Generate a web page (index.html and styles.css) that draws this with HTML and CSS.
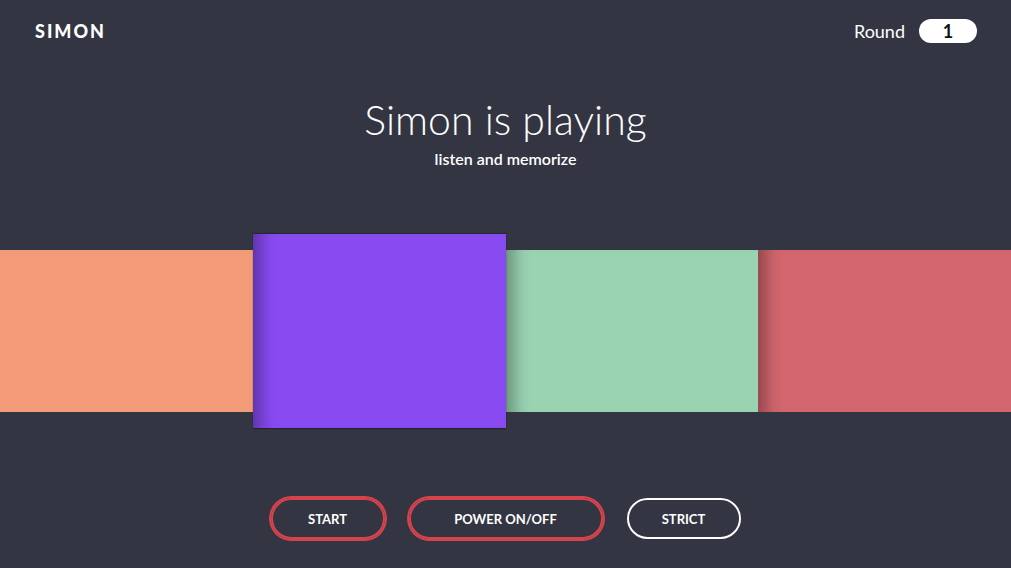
FILE: index.html
```html
<!DOCTYPE html>
<html lang="en">
<head>
<meta charset="utf-8">
<title>Simon</title>
<link rel="stylesheet" href="styles.css">
</head>
<body>
<div class="app">
  <header class="topbar">
    <div class="logo">SIMON</div>
    <div class="round">
      <span class="round-label">Round</span>
      <span class="round-count">1</span>
    </div>
  </header>
  <section class="status">
    <h1 class="status-title">Simon is playing</h1>
    <p class="status-sub">listen and memorize</p>
  </section>
  <section class="board">
    <div class="tile tile-orange"></div>
    <div class="tile tile-purple is-active"></div>
    <div class="tile tile-green"></div>
    <div class="tile tile-red"></div>
  </section>
  <section class="controls">
    <button class="btn btn-on btn-start">START</button>
    <button class="btn btn-on btn-power">POWER ON/OFF</button>
    <button class="btn btn-strict">STRICT</button>
  </section>
</div>
</body>
</html>
```
FILE: styles.css
```css
* { box-sizing: border-box; }
html, body {
  margin: 0;
  padding: 0;
  background: #333542;
  color: #ffffff;
  font-family: Lato, "Open Sans", sans-serif;
}
.app {
  width: 1011px;
  height: 568px;
  display: flex;
  flex-direction: column;
  overflow: hidden;
}
.topbar {
  height: 62px;
  display: flex;
  align-items: center;
  justify-content: space-between;
  padding: 0 34px 0 35px;
}
.logo {
  font-weight: 900;
  font-size: 18px;
  letter-spacing: 2px;
}
.round {
  display: flex;
  align-items: center;
  gap: 14px;
}
.round-label {
  font-size: 18px;
}
.round-count {
  width: 58px;
  height: 24px;
  border-radius: 12px;
  background: #ffffff;
  color: #111111;
  font-size: 18px;
  font-weight: 700;
  line-height: 24px;
  text-align: center;
}
.status {
  text-align: center;
  margin-top: 36px;
}
.status-title {
  margin: 0;
  font-size: 41px;
  font-weight: 300;
  line-height: 44px;
}
.status-sub {
  margin: 8px 0 0;
  font-size: 16px;
  font-weight: 600;
  line-height: 18px;
}
.board {
  margin-top: 66px;
  height: 194px;
  display: flex;
  align-items: center;
}
.tile {
  flex: 1 1 0;
  height: 162px;
}
.tile + .tile {
  box-shadow: inset 22px 0 16px -14px rgba(0, 0, 0, 0.32);
}
.tile-orange { background: #f39a76; }
.tile-purple { background: #884bf2; }
.tile-green { background: #9ad3b2; }
.tile-red { background: #d3666f; }
.tile.is-active {
  height: 194px;
  position: relative;
  z-index: 1;
  box-shadow: inset 22px 0 16px -14px rgba(0, 0, 0, 0.32), 0 1px 1px rgba(0, 0, 0, 0.35), 0 -1px 1px rgba(0, 0, 0, 0.25);
}
.controls {
  margin-top: 70px;
  display: flex;
  justify-content: center;
  gap: 24px;
}
.btn {
  height: 41px;
  min-width: 114px;
  padding: 0 30px;
  border: 2px solid #ffffff;
  border-radius: 21px;
  background: transparent;
  color: #ffffff;
  font-family: Lato, "Open Sans", sans-serif;
  font-size: 13px;
  font-weight: 700;
  cursor: pointer;
}
.btn-power {
  min-width: 194px;
}
.btn-on {
  border-color: #d6434d;
  box-shadow: 0 0 0 2px #d6434d;
}
```
